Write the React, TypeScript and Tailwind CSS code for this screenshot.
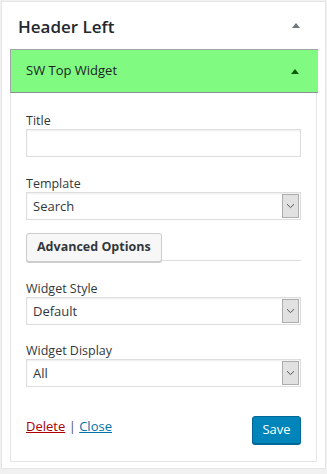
import React from "react";

const font = { fontFamily: '"Open Sans", "Noto Sans", sans-serif' };

const Chevron = () => (
  <svg width="9" height="6" viewBox="0 0 9 6" fill="none">
    <path d="M1 1.2 L4.5 4.6 L8 1.2" stroke="#555" strokeWidth="1" />
  </svg>
);

const Select: React.FC<{ value: string }> = ({ value }) => (
  <div className="flex h-[28px] w-full items-stretch border border-[#ddd] bg-white shadow-[inset_0_1px_2px_rgba(0,0,0,0.07)]">
    <span className="flex flex-1 items-center pl-[6px] pt-[1px] text-[13px] text-[#32373c]">{value}</span>
    <span className="m-[1px] flex w-[17px] items-center justify-center border border-[#adadad] bg-[#e1e1e1]">
      <Chevron />
    </span>
  </div>
);

const Label: React.FC<{ children: React.ReactNode }> = ({ children }) => (
  <label className="block h-[17px] text-[12.5px] leading-[17px] text-[#32373c]">{children}</label>
);

export default function App() {
  return (
    <div className="h-[474px] w-[327px] bg-[#f1f1f1] p-[1px]" style={font}>
      <div className="h-[468px] w-[325px] border border-[#e5e5e5] bg-white px-[8px]">
        {/* Sidebar title */}
        <div className="flex h-[47px] items-center justify-between pl-[8px] pr-[17px]">
          <h2 className="pt-[2px] text-[17px] font-semibold text-[#23282d]">Header Left</h2>
          <span className="h-0 w-0 border-x-[4px] border-b-[5px] border-x-transparent border-b-[#72777c]" />
        </div>

        {/* Widget */}
        <div className="w-[308px]">
          <div className="flex h-[44px] items-center justify-between border-t border-b border-l border-[#a0a5aa] border-b-[#8c8f94] bg-[#80fa80] pl-[15px] pr-[19px]">
            <span className="text-[13px] text-[#1d2327]">SW Top Widget</span>
            <span className="h-0 w-0 border-x-[4px] border-b-[5px] border-x-transparent border-b-[#0b5d0b]" />
          </div>
          <div className="mr-[1px] h-[369px] border-x border-b border-[#e5e5e5] px-[15px] pt-[19px]">
            <Label>Title</Label>
            <div className="h-[28px] w-full border border-[#ddd] shadow-[inset_0_1px_2px_rgba(0,0,0,0.07)]" />

            <div className="mt-[18px]">
              <Label>Template</Label>
              <Select value="Search" />
            </div>

            <div className="mt-[13px] flex items-end">
              <button className="h-[29px] rounded-[3px] border border-[#ccc] bg-[#f7f7f7] px-[10px] text-[12.5px] font-bold text-[#32373c] shadow-[0_1px_0_#ccc]">
                Advanced Options
              </button>
              <div className="mb-[1px] flex-1 border-b border-[#ddd]" />
            </div>

            <div className="mt-[18px]">
              <Label>Widget Style</Label>
              <Select value="Default" />
            </div>

            <div className="mt-[17px]">
              <Label>Widget Display</Label>
              <Select value="All" />
            </div>

            <div className="mt-[29px] flex items-start justify-between">
              <div className="pt-[1px] text-[13px] text-[#555]">
                <a className="text-[#a00] underline">Delete</a> |{" "}
                <a className="text-[#0073aa] underline">Close</a>
              </div>
              <button className="h-[28px] w-[49px] rounded-[3px] border border-[#006799] bg-[#0085ba] text-[13px] text-white shadow-[0_1px_0_#006799]">
                Save
              </button>
            </div>
          </div>
        </div>
      </div>
    </div>
  );
}
